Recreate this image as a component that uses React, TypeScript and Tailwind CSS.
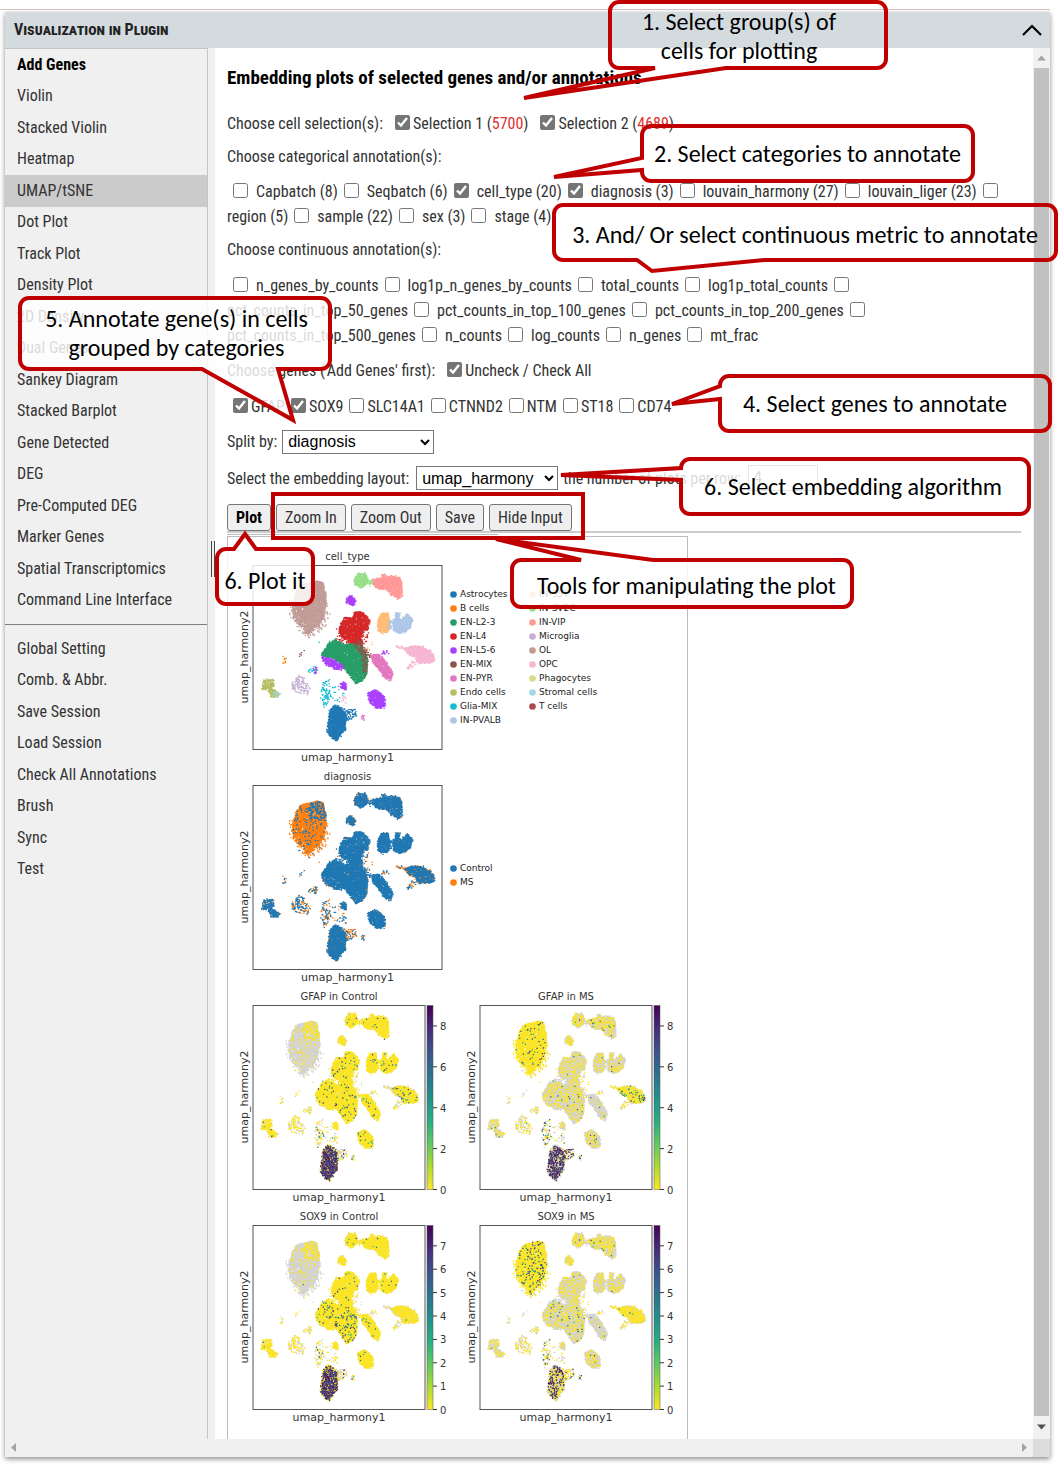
import type { ReactNode } from "react";

type Pt = [number, number];
type Cluster = {
  color: string;
  poly: Pt[];
  density: number; // share of full coverage
  ms: number; // share of cells from the MS group
  gfap: number; // share of cells expressing the gene
  sox9: number;
  high?: boolean;
};

const CLUSTERS: Cluster[] = [
  { color: "#c19c96", density: 0.7, ms: 0.96, gfap: 0.02, sox9: 0.06, poly: [[187, 50], [210, 50], [218, 85], [220, 120], [214, 155], [196, 180], [164, 212], [152, 190], [128, 170], [118, 138], [124, 105], [130, 78], [144, 60], [164, 54]] },
  { color: "#c19c96", density: 0.12, ms: 0.96, gfap: 0, sox9: 0.03, poly: [[210, 50], [222, 110], [230, 150], [214, 190], [170, 222], [145, 205], [110, 150], [112, 110], [130, 90], [200, 180]] },
  { color: "#98df8a", density: 0.8, ms: 0.25, gfap: 0.03, sox9: 0.03, poly: [[303, 40], [316, 25], [336, 25], [344, 40], [342, 58], [326, 68], [306, 62]] },
  { color: "#98df8a", density: 0.25, ms: 0.3, gfap: 0.04, sox9: 0.1, poly: [[340, 48], [370, 42], [372, 68], [342, 60]] },
  { color: "#ff9896", density: 0.9, ms: 0.18, gfap: 0.03, sox9: 0.02, poly: [[362, 42], [384, 40], [391, 26], [400, 36], [432, 34], [448, 46], [447, 92], [436, 103], [415, 88], [400, 72], [380, 72], [362, 60]] },
  { color: "#aa40fc", density: 0.9, ms: 0.3, gfap: 0.02, sox9: 0.02, poly: [[291, 88], [298, 96], [307, 108], [302, 122], [280, 112], [284, 104]] },
  { color: "#d62728", density: 0.8, ms: 0.12, gfap: 0.04, sox9: 0.02, poly: [[267, 168], [280, 155], [297, 162], [308, 139], [332, 143], [350, 166], [347, 191], [330, 196], [326, 238], [304, 250], [286, 228], [268, 216], [258, 200]] },
  { color: "#d62728", density: 0.12, ms: 0.3, gfap: 0.02, sox9: 0.01, poly: [[250, 185], [350, 190], [340, 240], [250, 250]] },
  { color: "#ffbb78", density: 1, ms: 0.12, gfap: 0.03, sox9: 0.01, poly: [[375, 165], [387, 146], [404, 144], [412, 172], [408, 198], [392, 208], [376, 198]] },
  { color: "#aec7e8", density: 0.3, ms: 0.15, gfap: 0.03, sox9: 0.01, poly: [[404, 168], [424, 165], [424, 196], [406, 194]] },
  { color: "#aec7e8", density: 1, ms: 0.12, gfap: 0.03, sox9: 0.01, poly: [[420, 174], [430, 146], [444, 144], [436, 160], [446, 164], [462, 146], [479, 164], [472, 188], [446, 208], [424, 196]] },
  { color: "#279e68", density: 0.95, ms: 0.12, gfap: 0.05, sox9: 0.12, poly: [[205, 270], [230, 232], [250, 222], [268, 240], [300, 236], [330, 252], [342, 275], [342, 328], [325, 350], [309, 356], [288, 328], [268, 300], [240, 278], [214, 276]] },
  { color: "#aa40fc", density: 0.75, ms: 0.1, gfap: 0.03, sox9: 0.02, poly: [[204, 276], [232, 280], [274, 304], [266, 315], [240, 310], [218, 296]] },
  { color: "#8c564b", density: 0.35, ms: 0.12, gfap: 0.02, sox9: 0.06, poly: [[300, 236], [322, 220], [344, 260], [344, 325], [334, 340], [326, 270]] },
  { color: "#8c564b", density: 0.3, ms: 0.1, gfap: 0.03, sox9: 0.03, poly: [[344, 264], [372, 270], [392, 300], [396, 318], [370, 308]] },
  { color: "#e377c2", density: 0.9, ms: 0.03, gfap: 0.03, sox9: 0.02, poly: [[356, 272], [380, 268], [398, 288], [420, 326], [412, 346], [394, 338], [378, 310], [362, 294]] },
  { color: "#f7b6d2", density: 0.95, ms: 0.45, gfap: 0.12, sox9: 0.02, poly: [[455, 250], [480, 244], [504, 244], [532, 256], [544, 276], [544, 290], [530, 294], [500, 294], [484, 276], [464, 268]] },
  { color: "#f7b6d2", density: 0.5, ms: 0.85, gfap: 0.01, sox9: 0.01, poly: [[426, 238], [444, 242], [470, 250], [468, 258], [444, 252], [428, 244]] },
  { color: "#f7b6d2", density: 0.35, ms: 0.5, gfap: 0.01, sox9: 0.01, poly: [[462, 306], [482, 284], [500, 292], [466, 314]] },
  { color: "#b5bd61", density: 0.6, ms: 0.2, gfap: 0.08, sox9: 0.02, poly: [[34, 344], [60, 342], [62, 362], [58, 372], [78, 386], [76, 396], [56, 396], [44, 372], [26, 372]] },
  { color: "#9edae5", density: 0.25, ms: 0.3, gfap: 0.02, sox9: 0.02, poly: [[58, 380], [84, 382], [80, 396], [60, 398]] },
  { color: "#c5b0d5", density: 0.28, ms: 0.5, gfap: 0.02, sox9: 0.01, poly: [[116, 350], [140, 328], [160, 342], [172, 366], [166, 388], [140, 386], [120, 376]] },
  { color: "#17becf", density: 0.25, ms: 0.5, gfap: 0.04, sox9: 0.06, poly: [[150, 318], [186, 306], [196, 318], [190, 326], [156, 322]] },
  { color: "#aa40fc", density: 0.2, ms: 0.3, gfap: 0.05, sox9: 0.02, poly: [[178, 306], [194, 306], [194, 328], [180, 326]] },
  { color: "#17becf", density: 0.22, ms: 0.5, gfap: 0.5, sox9: 0.3, poly: [[208, 352], [230, 344], [234, 400], [216, 424], [206, 400]] },
  { color: "#17becf", density: 0.03, ms: 0.5, gfap: 0.5, sox9: 0.3, poly: [[196, 370], [280, 360], [276, 420], [200, 430]] },
  { color: "#aa40fc", density: 0.9, ms: 0.15, gfap: 0.02, sox9: 0.01, poly: [[264, 354], [272, 351], [280, 358], [280, 374], [264, 370]] },
  { color: "#f7b6d2", density: 0.2, ms: 0.3, gfap: 0.4, sox9: 0.1, poly: [[258, 398], [282, 396], [280, 416], [262, 412]] },
  { color: "#aa40fc", density: 0.85, ms: 0.15, gfap: 0.05, sox9: 0.02, poly: [[346, 384], [368, 374], [384, 384], [397, 402], [394, 428], [372, 432], [348, 408]] },
  { color: "#1f77b4", density: 1, ms: 0.25, gfap: 0.9, sox9: 0.7, high: true, poly: [[232, 436], [248, 420], [264, 430], [278, 446], [278, 494], [250, 526], [230, 512], [222, 496], [228, 470]] },
  { color: "#1f77b4", density: 0.3, ms: 0.65, gfap: 0.6, sox9: 0.3, high: true, poly: [[262, 426], [306, 432], [312, 456], [292, 462], [276, 470]] },
  { color: "#e377c2", density: 0.5, ms: 0.5, gfap: 0.5, sox9: 0.5, poly: [[326, 452], [336, 452], [336, 464], [326, 464]] },
  { color: "#8c564b", density: 0.25, ms: 0.3, gfap: 0.02, sox9: 0.01, poly: [[138, 274], [150, 256], [156, 256], [144, 276]] },
  { color: "#ff7f0e", density: 0.3, ms: 0.6, gfap: 0.02, sox9: 0.01, poly: [[91, 276], [99, 276], [99, 296], [91, 296]] },
  { color: "#aa40fc", density: 0.25, ms: 0.2, gfap: 0.02, sox9: 0.01, poly: [[382, 264], [406, 252], [408, 266], [392, 272]] },
  { color: "#ffbb78", density: 0.05, ms: 0.7, gfap: 0.02, sox9: 0.01, poly: [[334, 250], [366, 222], [370, 240], [344, 262]] },
  { color: "#17becf", density: 0.03, ms: 0.7, gfap: 0.02, sox9: 0.01, poly: [[186, 200], [214, 236], [196, 240], [180, 220]] },
];

type Cell = { x: number; y: number; c: Cluster; ms: boolean; r: number; s: number };

function makeRandom(seed: number) {
  let a = seed;
  return () => {
    a = (a + 0x6d2b79f5) | 0;
    let t = Math.imul(a ^ (a >>> 15), 1 | a);
    t = (t + Math.imul(t ^ (t >>> 7), 61 | t)) ^ t;
    return ((t ^ (t >>> 14)) >>> 0) / 4294967296;
  };
}

function inside(x: number, y: number, p: Pt[]) {
  let hit = false;
  for (let i = 0, j = p.length - 1; i < p.length; j = i++) {
    const [xi, yi] = p[i];
    const [xj, yj] = p[j];
    if (yi > y !== yj > y && x < ((xj - xi) * (y - yi)) / (yj - yi) + xi) hit = !hit;
  }
  return hit;
}

const CELLS: Cell[] = (() => {
  const rnd = makeRandom(11);
  const cells: Cell[] = [];
  for (const c of CLUSTERS) {
    const xs = c.poly.map((p) => p[0]);
    const ys = c.poly.map((p) => p[1]);
    const x0 = Math.min(...xs);
    const y0 = Math.min(...ys);
    const w = Math.max(...xs) - x0;
    const h = Math.max(...ys) - y0;
    const tries = Math.round(((w * h) / (c.density > 0.55 ? 3 : 5)) * c.density);
    for (let i = 0; i < tries; i++) {
      const x = x0 + rnd() * w;
      const y = y0 + rnd() * h;
      if (!inside(x, y, c.poly)) continue;
      const nearTop = c.ms === 0.96 && Math.hypot(x - 196, y - 72) < 34;
      cells.push({
        x: Math.round(x + rnd() * 6 - 3),
        y: Math.round(y + rnd() * 6 - 3),
        c,
        ms: rnd() < (nearTop ? 0.78 : c.ms),
        r: rnd(),
        s: rnd(),
      });
    }
  }
  return cells;
})();

type Layer = { color: string; d: string; w: number };

function toPath(cells: Cell[]) {
  return cells.map((p) => `M${p.x - 2} ${p.y}h4`).join("");
}

function byCellType(): Layer[] {
  return CLUSTERS.map((c) => ({ color: c.color, w: 4, d: toPath(CELLS.filter((p) => p.c === c)) }));
}

function byDiagnosis(): Layer[] {
  return [
    { color: "#ff7f0e", w: 4, d: toPath(CELLS.filter((p) => p.ms)) },
    { color: "#1f77b4", w: 4, d: toPath(CELLS.filter((p) => !p.ms)) },
  ];
}

function byGene(gene: "gfap" | "sox9", ms: boolean): Layer[] {
  const own = CELLS.filter((p) => p.ms === ms);
  const on = own.filter((p) => {
    const scale = p.c.high ? (gene === "gfap" && ms ? 1 : 0.5) : ms ? 0.9 : 0.35;
    return p.r < p.c[gene] * scale;
  });
  const low = ["#35b779", "#21918c", "#31688e", "#443983"];
  const high = ["#440154", "#472d7b", "#3b528b", "#472d7b"];
  const layers: Layer[] = [
    { color: "#d3d3d3", w: 4, d: toPath(CELLS.filter((p) => p.ms !== ms)) },
    { color: "#fae424", w: 4, d: toPath(own) },
  ];
  for (let k = 0; k < 4; k++) {
    const pick = (hi: boolean) => on.filter((p) => !!p.c.high === hi && Math.floor(p.s * 4) === k);
    layers.push({ color: low[k], w: 4, d: toPath(pick(false)) });
    layers.push({ color: high[k], w: 4, d: toPath(pick(true)) });
  }
  return layers;
}

type PanelProps = { title: string; layers: Layer[]; ticks?: number[]; max?: number; id: string };

function Panel({ title, layers, ticks, max = 1, id }: PanelProps) {
  const fw = ticks ? 172 : 189;
  return (
    <svg
      role="img"
      aria-label={title}
      width={227}
      height={220}
      viewBox="0 0 227 220"
      className="shrink-0 fill-[#333] font-['DejaVu_Sans',sans-serif] text-[10px]"
    >
      <text x={18 + fw / 2} y={15} textAnchor="middle">{title}</text>
      <g transform={`translate(18 20) scale(${fw / 568} 0.3333)`} fill="none">
        {layers.map((l, i) => (
          <path key={i} d={l.d} stroke={l.color} strokeWidth={l.w} />
        ))}
      </g>
      <rect x={18} y={20.5} width={fw} height={184} fill="none" stroke="#555" />
      <text x={18 + fw / 2} y={216} textAnchor="middle" className="text-[11px]">umap_harmony1</text>
      <text transform="translate(13 112) rotate(-90)" textAnchor="middle" className="text-[11px]">umap_harmony2</text>
      {ticks && (
        <g>
          <defs>
            <linearGradient id={id} x1="0" y1="0" x2="0" y2="1">
              <stop offset="0" stopColor="#440154" />
              <stop offset="0.13" stopColor="#472d7b" />
              <stop offset="0.25" stopColor="#3b528b" />
              <stop offset="0.38" stopColor="#2c728e" />
              <stop offset="0.5" stopColor="#21918c" />
              <stop offset="0.63" stopColor="#28ae80" />
              <stop offset="0.75" stopColor="#5ec962" />
              <stop offset="0.88" stopColor="#addc30" />
              <stop offset="1" stopColor="#fde725" />
            </linearGradient>
          </defs>
          <rect x={192} y={20.5} width={6} height={184} fill={`url(#${id})`} stroke="#555" strokeWidth={0.5} />
          {ticks.map((t) => {
            const y = 204.5 - (t / max) * 184;
            return (
              <g key={t}>
                <path d={`M198 ${y}h4`} stroke="#333" />
                <text x={205} y={y + 4}>{t}</text>
              </g>
            );
          })}
        </g>
      )}
    </svg>
  );
}

const LEGEND_A: [string, string][] = [
  ["Astrocytes", "#1f77b4"], ["B cells", "#ff7f0e"], ["EN-L2-3", "#279e68"], ["EN-L4", "#d62728"], ["EN-L5-6", "#aa40fc"],
  ["EN-MIX", "#8c564b"], ["EN-PYR", "#e377c2"], ["Endo cells", "#b5bd61"], ["Glia-MIX", "#17becf"], ["IN-PVALB", "#aec7e8"],
];
const LEGEND_B: [string, string][] = [
  ["IN-SST", "#ffbb78"], ["IN-SV2C", "#98df8a"], ["IN-VIP", "#ff9896"], ["Microglia", "#c5b0d5"], ["OL", "#c49c94"],
  ["OPC", "#f7b6d2"], ["Phagocytes", "#dbdb8d"], ["Stromal cells", "#9edae5"], ["T cells", "#ad494a"],
];
const LEGEND_C: [string, string][] = [["Control", "#1f77b4"], ["MS", "#ff7f0e"]];

function Legend({ items }: { items: [string, string][] }) {
  return (
    <ul className="w-[79px] font-['DejaVu_Sans',sans-serif] text-[9px] leading-[14px] text-[#222]">
      {items.map(([name, color]) => (
        <li key={name} className="flex items-center gap-[3px] whitespace-nowrap">
          <svg width="7" height="7" viewBox="0 0 7 7"><circle cx="3.5" cy="3.5" r="3.3" fill={color} /></svg>
          {name}
        </li>
      ))}
    </ul>
  );
}

function Check({ label, checked, tight }: { label: ReactNode; checked?: boolean; tight?: boolean }) {
  return (
    <label className="contents">
      <input
        type="checkbox"
        defaultChecked={checked}
        className={`mb-[3px] size-[15px] shrink-0 accent-[#757575] ${tight ? "mr-[3px] ml-[6px]" : "mr-2 ml-[6px]"}`}
      />
      <span className="whitespace-nowrap">{label}</span>
    </label>
  );
}

type BubbleProps = {
  place: string;
  w: number;
  h: number;
  side: "top" | "bottom" | "left";
  from: number;
  to: number;
  tip: Pt;
  veil?: boolean;
  children: ReactNode;
};

// Rounded speech bubble whose pointer leaves one side between `from` and `to`.
function Bubble({ place, w, h, side, from, to, tip, veil, children }: BubbleProps) {
  const r = 9;
  const R = w - 2;
  const B = h - 2;
  const [tx, ty] = tip;
  const d =
    `M${r + 2} 2` +
    (side === "top" ? `H${from}L${tx} ${ty}L${to} 2` : "") +
    `H${R - r}A${r} ${r} 0 0 1 ${R} ${r + 2}V${B - r}A${r} ${r} 0 0 1 ${R - r} ${B}` +
    (side === "bottom" ? `H${to}L${tx} ${ty}L${from} ${B}` : "") +
    `H${r + 2}A${r} ${r} 0 0 1 2 ${B - r}` +
    (side === "left" ? `V${to}L${tx} ${ty}L2 ${from}` : "") +
    `V${r + 2}A${r} ${r} 0 0 1 ${r + 2} 2Z`;
  return (
    <div className={`pointer-events-none absolute flex items-center justify-center text-center font-['Carlito','Calibri','Lato',sans-serif] text-2xl leading-[29px] whitespace-nowrap text-black ${place}`}>
      <svg className="absolute inset-0 overflow-visible" width={w} height={h} aria-hidden="true">
        <path d={d} fill={veil ? "rgba(255,255,255,0.82)" : "none"} stroke="#c00000" strokeWidth={4} strokeLinejoin="miter" strokeMiterlimit={3} />
      </svg>
      <span className="relative">{children}</span>
    </div>
  );
}

const TOOLS = [
  "Add Genes", "Violin", "Stacked Violin", "Heatmap", "UMAP/tSNE", "Dot Plot", "Track Plot", "Density Plot", "2D Density",
  "Dual Genes", "Sankey Diagram", "Stacked Barplot", "Gene Detected", "DEG", "Pre-Computed DEG", "Marker Genes",
  "Spatial Transcriptomics", "Command Line Interface",
];
const SETTINGS = ["Global Setting", "Comb. & Abbr.", "Save Session", "Load Session", "Check All Annotations", "Brush", "Sync", "Test"];

const CATEGORICAL: [string, boolean][] = [
  ["Capbatch (8)", false], ["Seqbatch (6)", false], ["cell_type (20)", true], ["diagnosis (3)", true],
  ["louvain_harmony (27)", false], ["louvain_liger (23)", false], ["region (5)", false], ["sample (22)", false],
  ["sex (3)", false], ["stage (4)", false],
];
const CONTINUOUS = [
  "n_genes_by_counts", "log1p_n_genes_by_counts", "total_counts", "log1p_total_counts", "pct_counts_in_top_50_genes",
  "pct_counts_in_top_100_genes", "pct_counts_in_top_200_genes", "pct_counts_in_top_500_genes", "n_counts", "log_counts",
  "n_genes", "mt_frac",
];
const GENES: [string, boolean][] = [
  ["GFAP", true], ["SOX9", true], ["SLC14A1", false], ["CTNND2", false], ["NTM", false], ["ST18", false], ["CD74", false],
];

function NavItem({ name }: { name: string }) {
  const tone = name === "UMAP/tSNE" ? "bg-[#cbcbcb]" : name === "Add Genes" ? "font-bold text-black" : "";
  return (
    <li className="flex">
      <a href="#" className={`flex flex-1 items-center pl-3 ${tone}`}>{name}</a>
    </li>
  );
}

const selectStyle = "h-6 border border-[#767676] bg-white pl-px font-['Liberation_Sans',Arial,sans-serif] text-base leading-none text-black";
const buttonStyle = "h-[27px] rounded-[3px] border border-[#767676] bg-[#efefef] leading-none";

export default function App() {
  return (
    <div className="relative overflow-hidden bg-white pt-[9px] font-['Roboto_Condensed','Roboto',sans-serif] text-base text-[#333]">
      <div className="mr-2 border-t border-[#d9c5c5] pt-0.5 pl-[5px]">
        <div className="shadow-[0_2px_5px_rgba(0,0,0,0.45)]">
          <header className="flex h-9 items-center justify-between bg-[#d3dbdf] pr-2 pl-[9px]">
            <h1 className="text-base font-bold text-[#222] [font-variant-caps:small-caps]">Visualization in Plugin</h1>
            <button type="button" aria-label="Collapse panel" className="text-black">
              <svg width="20" height="12" viewBox="0 0 20 12" fill="none" stroke="currentColor" strokeWidth="2.2"><path d="M1 11l9-9 9 9" /></svg>
            </button>
          </header>

          <div className="flex">
            <nav className="w-[203px] shrink-0 border-t border-r border-[#c4c4c4] bg-[#f0f0f0]">
              <ul className="grid h-[567px] auto-rows-fr">{TOOLS.map((t) => <NavItem key={t} name={t} />)}</ul>
              <hr className="my-2 border-[#808080]" />
              <ul className="grid h-[252px] auto-rows-fr">{SETTINGS.map((t) => <NavItem key={t} name={t} />)}</ul>
            </nav>
            <div className="w-[7px] shrink-0 bg-[#f0f0f0] pt-[493px] pl-[3px]">
              <div className="h-9 w-1 border-x border-[#444]" />
            </div>

            <main className="min-w-0 flex-1 bg-white pt-[18px] pr-3 pl-3 leading-[25px]">
              <h2 className="text-[19px] leading-6 font-bold text-black">Embedding plots of selected genes and/or annotations</h2>
              <div className="mt-[21px] flex items-center">
                <span className="mr-1.5">Choose cell selection(s):</span>
                <Check tight checked label={<>Selection 1 (<span className="text-[#e03030]">5700</span>)</>} />
                <span className="w-1.5" />
                <Check tight checked label={<>Selection 2 (<span className="text-[#e03030]">4689</span>)</>} />
              </div>
              <p className="mt-2">Choose categorical annotation(s):</p>
              <div className="mt-[10px] flex flex-wrap items-center">
                {CATEGORICAL.map(([n, on]) => <Check key={n} label={n} checked={on} />)}
              </div>
              <p className="mt-2">Choose continuous annotation(s):</p>
              <div className="mt-[11px] flex flex-wrap items-center">
                {CONTINUOUS.map((n) => <Check key={n} label={n} />)}
              </div>
              <div className="mt-[10px] flex items-center">
                <span className="mr-1.5">Choose genes ('Add Genes' first):</span>
                <Check tight checked label="Uncheck / Check All" />
              </div>
              <div className="mt-[11px] flex flex-wrap items-center">
                {GENES.map(([n, on]) => <Check key={n} tight label={n} checked={on} />)}
              </div>
              <label className="mt-[10px] flex items-center gap-[5px]">
                Split by:
                <select className={`w-[152px] ${selectStyle}`}><option>diagnosis</option></select>
              </label>
              <div className="mt-[11px] flex items-center gap-[5px]">
                <label className="flex items-center gap-[7px]">
                  Select the embedding layout:
                  <select className={`w-[142px] ${selectStyle}`}><option>umap_harmony</option></select>
                </label>
                <label className="flex items-center gap-[7px]">
                  the number of plots per row:
                  <input type="text" defaultValue="4" className="h-[26px] w-[70px] border border-[#767676] px-1 font-['Liberation_Sans',Arial,sans-serif]" />
                </label>
              </div>
              <div className="mt-[13px] flex gap-[5px] border-b-2 border-[#ccc]">
                <button type="button" className={`px-2 font-bold text-black ${buttonStyle}`}>Plot</button>
                <button type="button" className={`px-2 ${buttonStyle}`}>Zoom In</button>
                <button type="button" className={`px-2 ${buttonStyle}`}>Zoom Out</button>
                <button type="button" className={`px-2 ${buttonStyle}`}>Save</button>
                <button type="button" className={`px-2 ${buttonStyle}`}>Hide Input</button>
              </div>
              <div className="mt-px h-0.5 w-[271px] border-t border-[#bbb]" />
              <section aria-label="Plots" className="w-[461px] border border-b-0 border-[#bbb] pt-2 pb-[14px] pl-[7px]">
                <div className="flex">
                  <Panel id="types" title="cell_type" layers={byCellType()} />
                  <div className="-ml-3 flex pt-[42px]">
                    <Legend items={LEGEND_A} />
                    <Legend items={LEGEND_B} />
                  </div>
                </div>
                <div className="flex">
                  <Panel id="diagnosis" title="diagnosis" layers={byDiagnosis()} />
                  <div className="-ml-3 flex items-center">
                    <Legend items={LEGEND_C} />
                  </div>
                </div>
                <div className="flex">
                  <Panel id="gfap-control" title="GFAP in Control" layers={byGene("gfap", false)} ticks={[0, 2, 4, 6, 8]} max={9} />
                  <Panel id="gfap-ms" title="GFAP in MS" layers={byGene("gfap", true)} ticks={[0, 2, 4, 6, 8]} max={9} />
                </div>
                <div className="flex">
                  <Panel id="sox-control" title="SOX9 in Control" layers={byGene("sox9", false)} ticks={[0, 1, 2, 3, 4, 5, 6, 7]} max={7.87} />
                  <Panel id="sox-ms" title="SOX9 in MS" layers={byGene("sox9", true)} ticks={[0, 1, 2, 3, 4, 5, 6, 7]} max={7.87} />
                </div>
              </section>
            </main>

            <div className="flex w-[17px] shrink-0 flex-col items-center bg-[#f1f1f1]" aria-hidden="true">
              <svg width="17" height="20" className="shrink-0"><path d="M4 12.500h9l-4.500-5z" fill="#a3a3a3" /></svg>
              <div className="w-[15px] flex-1 bg-[#c1c1c1]" />
              <svg width="17" height="23" className="shrink-0"><path d="M4 8.500h9l-4.500 5z" fill="#505050" /></svg>
            </div>
          </div>

          <div className="flex h-[18px] bg-[#f0f0f0]" aria-hidden="true">
            <svg width="17" height="18"><path d="M11 4v9l-5-4.500z" fill="#a3a3a3" /></svg>
            <span className="flex-1" />
            <svg width="17" height="18"><path d="M6 4v9l5-4.500z" fill="#a3a3a3" /></svg>
            <span className="w-[17px] bg-[#dcdcdc]" />
          </div>
        </div>
      </div>
      <div className="h-[7px]" />

      <Bubble place="left-[608px] top-0 h-[70px] w-[280px]" w={280} h={70} side="bottom" from={47} to={118} tip={[-84, 98]}>
        <span className="block pr-[18px] pt-0.5">1. Select group(s) of<br />cells for plotting</span>
      </Bubble>
      <Bubble place="left-[640px] top-[124px] h-[59px] w-[335px]" w={335} h={59} side="left" from={34} to={46} tip={[-86, 53]}>
        2. Select categories to annotate
      </Bubble>
      <Bubble place="left-[552px] top-[203px] h-[59px] w-[506px]" w={506} h={59} side="bottom" from={85} to={213} tip={[100, 68]}>
        <span className="block pt-1">3. And/ Or select continuous metric to annotate</span>
      </Bubble>
      <Bubble place="left-[718px] top-[374px] h-[59px] w-[334px]" w={334} h={59} side="left" from={12} to={25} tip={[-46, 30]}>
        <span className="block pr-5">4. Select genes to annotate</span>
      </Bubble>
      <Bubble place="left-[18px] top-[296px] h-[75px] w-[314px]" w={314} h={75} side="bottom" from={184} to={260} tip={[275, 124]} veil>
        <span className="block pb-0.5 pl-[3px]">5. Annotate gene(s) in cells<br />grouped by categories</span>
      </Bubble>
      <Bubble place="left-[679px] top-[457px] h-[59px] w-[352px]" w={352} h={59} side="left" from={11} to={23} tip={[-118, 18]} veil>
        <span className="block pr-1">6. Select embedding algorithm</span>
      </Bubble>
      <Bubble place="left-[215px] top-[547px] h-[59px] w-[100px]" w={100} h={59} side="top" from={19} to={41} tip={[30, -13]} veil>
        <span className="block pt-2">6. Plot it</span>
      </Bubble>
      <Bubble place="left-[510px] top-[558px] h-[51px] w-[344px]" w={344} h={51} side="top" from={71} to={143} tip={[-14, -19]} veil>
        <span className="block pt-1 pl-[9px]">Tools for manipulating the plot</span>
      </Bubble>
      <div className="pointer-events-none absolute top-[492px] left-[271px] h-12 w-[314px] border-4 border-[#c00000]" />
    </div>
  );
}
